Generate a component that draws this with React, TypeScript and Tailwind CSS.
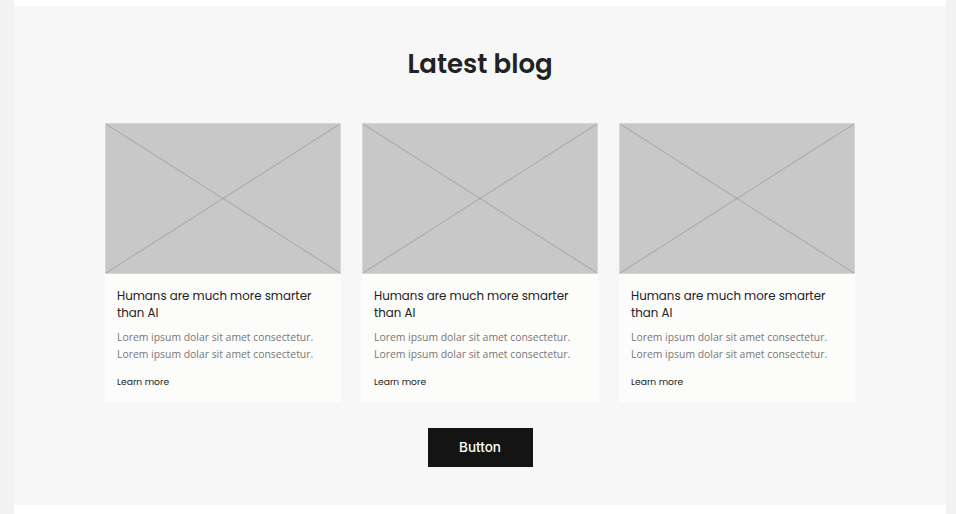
const posts = [1, 2, 3];

function Placeholder() {
  return (
    <div className="h-[151px] w-full bg-[#c8c8c8] border border-[#d6d6d6]">
      <svg className="w-full h-full block" viewBox="0 0 236 151" preserveAspectRatio="none">
        <line x1="0" y1="0" x2="236" y2="151" stroke="#9a9a9a" strokeWidth="0.8" />
        <line x1="236" y1="0" x2="0" y2="151" stroke="#9a9a9a" strokeWidth="0.8" />
      </svg>
    </div>
  );
}

function BlogCard() {
  return (
    <div className="w-[236px] bg-[#fcfcfb]">
      <Placeholder />
      <div className="px-3 pt-[14px] pb-[13px]">
        <h3 className="font-['Poppins','Lato',sans-serif] font-normal text-[11.8px] leading-[17px] text-[#222]">
          Humans are much more smarter than AI
        </h3>
        <p className="mt-[7px] font-['Open_Sans',sans-serif] text-[10.4px] leading-[17px] text-[#777]">
          Lorem ipsum dolar sit amet consectetur. Lorem ipsum dolar sit amet consectetur.
        </p>
        <a className="block mt-[12px] font-['Poppins','Lato',sans-serif] text-[9.2px] leading-[14px] text-[#222]">
          Learn more
        </a>
      </div>
    </div>
  );
}

export default function App() {
  return (
    <div className="min-h-[514px] bg-[#f2f2f2]">
      <div className="ml-[14px] mr-[10px] bg-white pt-[6px] pb-[9px]">
        <section className="bg-[#f7f7f7] h-[499px] flex flex-col items-center pt-[44px]">
          <h2 className="font-['Poppins','Lato',sans-serif] font-semibold text-[26px] leading-[28px] text-[#222]">
            Latest blog
          </h2>
          <div className="mt-[45px] flex gap-[21px]">
            {posts.map((p) => (
              <BlogCard key={p} />
            ))}
          </div>
          <button className="mt-[26px] w-[105px] h-[39px] bg-[#141414] text-white font-['Inter',sans-serif] font-medium text-[13.5px]">
            Button
          </button>
        </section>
      </div>
    </div>
  );
}
